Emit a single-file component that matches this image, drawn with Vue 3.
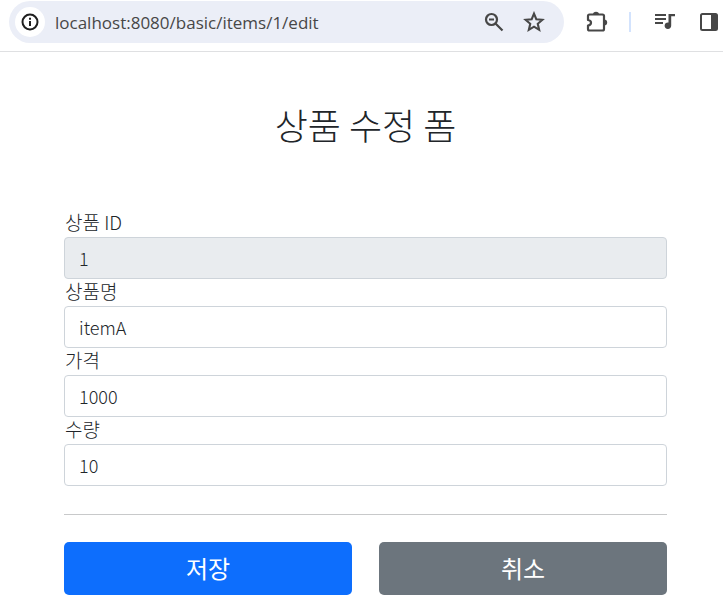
<script setup>
import { ref } from 'vue'

const url = ref('localhost:8080/basic/items/1/edit')
const fields = ref([
  { id: 'id', label: '상품 ID', value: '1', readonly: true },
  { id: 'itemName', label: '상품명', value: 'itemA', readonly: false },
  { id: 'price', label: '가격', value: '1000', readonly: false },
  { id: 'quantity', label: '수량', value: '10', readonly: false },
])
</script>

<template>
  <div class="browser">
    <header class="toolbar">
      <div class="omnibox">
        <button class="icon-button info" type="button" aria-label="사이트 정보">
          <svg width="20" height="20" viewBox="0 0 20 20" fill="none" stroke="#1f1f1f" stroke-width="2">
            <circle cx="10" cy="10" r="7.5" />
            <path d="M10 9v5M10 5.8v2" />
          </svg>
        </button>
        <input v-model="url" class="url" type="text" aria-label="주소" spellcheck="false" />
        <button class="icon-button zoom" type="button" aria-label="축소">
          <svg width="20" height="20" viewBox="0 0 20 20" fill="none" stroke="#474747" stroke-width="2.2">
            <circle cx="7.5" cy="7.5" r="5.5" />
            <path d="M11.5 11.5l7 7M5 7.5h5" />
          </svg>
        </button>
        <button class="icon-button" type="button" aria-label="북마크">
          <svg width="22" height="22" viewBox="0 0 20 20" fill="none" stroke="#474747" stroke-width="1.9">
            <path d="M10 2.4l2.1 5.1 5.5.5-4.2 3.6 1.3 5.5-4.7-2.9-4.7 2.9 1.3-5.5L2.4 8l5.5-.5z" />
          </svg>
        </button>
      </div>
      <nav class="actions" aria-label="브라우저 도구">
        <button class="icon-button" type="button" aria-label="확장 프로그램">
          <svg width="22" height="22" viewBox="0 0 22 22">
            <path d="M2 9V5q0-1.5 1.5-1.5h13Q18 3.5 18 5v13q0 1.500-1.500 1.500h-13Q2 19.500 2 18v-3.500q3-.4 3-2.750T2 9z" fill="none" stroke="#474747" stroke-width="2.200" stroke-linejoin="round" />
            <path d="M7 3.500a3 2.800 0 0 1 6 0zM18 8.500a3.200 3 0 0 1 0 6z" fill="#474747" />
          </svg>
        </button>
        <span class="divider"></span>
        <button class="icon-button media" type="button" aria-label="미디어 제어">
          <svg width="20" height="18" viewBox="0 0 20 18" fill="#474747">
            <path d="M0 1h11v2H0zM0 5h11v2H0zM0 9h8v2H0zM13.500 1H20v2.200h-3.800v9.300a3.300 3.300 0 1 1-2.700-3z" />
          </svg>
        </button>
        <button class="icon-button" type="button" aria-label="측면 패널">
          <svg width="20" height="20" viewBox="0 0 20 20">
            <rect x="2" y="2" width="16" height="16" rx="1.500" fill="none" stroke="#474747" stroke-width="2" />
            <path d="M12 2h6v16h-6z" fill="#474747" />
          </svg>
        </button>
      </nav>
    </header>

    <main class="container">
      <h1>상품 수정 폼</h1>
      <form @submit.prevent>
        <div v-for="field in fields" :key="field.id" class="field">
          <label :for="field.id">{{ field.label }}</label>
          <input :id="field.id" v-model="field.value" type="text" :name="field.id" :readonly="field.readonly" />
        </div>
        <hr />
        <div class="buttons">
          <button class="button primary" type="submit">저장</button>
          <button class="button secondary" type="button">취소</button>
        </div>
      </form>
    </main>
  </div>
</template>

<style>
body {
  background: #fff;
}
</style>

<style scoped>
* {
  box-sizing: border-box;
}

.browser,
.browser input,
.browser button {
  font-family: "Noto Sans CJK KR", sans-serif;
}

.browser {
  color: #212529;
  font-weight: 300;
}

.toolbar {
  display: flex;
  align-items: flex-start;
  height: 52px;
  padding: 1px 4px 0 9px;
  border-bottom: 1px solid #dfe0e2;
}

.omnibox {
  display: flex;
  flex: 1;
  align-items: center;
  min-width: 0;
  height: 42px;
  padding: 0 19px 0 6px;
  border-radius: 21px;
  background: #ebeef7;
}

.icon-button {
  display: flex;
  flex: none;
  align-items: center;
  justify-content: center;
  padding: 0;
  border: 0;
  background: none;
}

.info {
  width: 30px;
  height: 30px;
  border-radius: 50%;
  background: #fff;
}

.browser .url {
  flex: 1;
  min-width: 0;
  height: 30px;
  margin-left: 10px;
  padding: 0;
  border: 0;
  outline: 0;
  background: none;
  color: #474747;
  font-family: "Open Sans", "Noto Sans CJK KR", sans-serif;
  font-size: 17px;
  font-weight: 400;
}

.zoom {
  margin-right: 19px;
}

.actions {
  display: flex;
  align-items: center;
  height: 42px;
  padding-left: 22px;
}

.divider {
  width: 2px;
  height: 20px;
  margin: 0 24px 0 21px;
  background: #d3e3fd;
}

.media {
  margin-right: 24px;
}

.container {
  padding: 51px 56px 12px 64px;
}

h1 {
  margin: 0 0 65px;
  font-size: 36px;
  font-weight: 300;
  line-height: 42px;
  text-align: center;
}

.field label {
  display: block;
  padding: 0 0 4px 1px;
  font-size: 19px;
  line-height: 23px;
}

.field input {
  display: block;
  width: 100%;
  height: 42px;
  padding: 0 14px;
  border: 1px solid #ced4da;
  border-radius: 4px;
  outline: 0;
  background: #fff;
  color: #212529;
  font-size: 18px;
  font-weight: 300;
}

.field input:read-only {
  background: #e9ecef;
}

hr {
  height: 1px;
  margin: 28px 0 27px;
  border: 0;
  background: #c8c9ca;
}

.buttons {
  display: grid;
  grid-template-columns: 1fr 1fr;
  gap: 27px;
}

.button {
  height: 53px;
  padding: 0 0 2px;
  border: 0;
  border-radius: 5px;
  color: #fff;
  font-size: 24px;
  font-weight: 400;
  line-height: 36px;
}

.primary {
  background: #0d6efd;
}

.secondary {
  background: #6c757d;
}
</style>
